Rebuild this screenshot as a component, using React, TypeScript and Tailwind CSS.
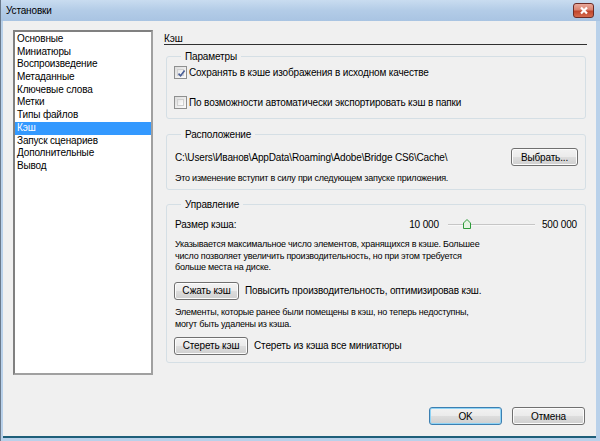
import React from "react"

const font = "font-['Tahoma','Liberation_Sans',Arial,sans-serif]"
const txt = "text-[10px] tracking-[-0.15px]"
const small = "text-[9px] tracking-[-0.22px]"

const items = [
  "Основные",
  "Миниатюры",
  "Воспроизведение",
  "Метаданные",
  "Ключевые слова",
  "Метки",
  "Типы файлов",
  "Кэш",
  "Запуск сценариев",
  "Дополнительные",
  "Вывод",
]

function Btn({ children, w, primary }: { children: React.ReactNode; w: string; primary?: boolean }) {
  return (
    <div
      className={`${w} ${txt} h-[18px] flex items-center justify-center rounded-[3px] border text-black bg-[linear-gradient(to_bottom,#f2f2f2_0%,#ebebeb_48%,#dddddd_52%,#cfcfcf_100%)] ${
        primary ? "border-[#3c7fb1] shadow-[inset_0_0_0_1px_#8fd3f5]" : "border-[#707070] shadow-[inset_0_0_0_1px_#fcfcfc]"
      }`}
    >
      {children}
    </div>
  )
}

function Check({ checked, label }: { checked?: boolean; label: string }) {
  return (
    <div className="flex items-center h-[13px]">
      <div className="w-[13px] h-[13px] border border-[#8e8f8f] bg-[linear-gradient(135deg,#dcdcdc,#fbfbfb)] p-[2px] flex">
        <div className="flex-1 bg-[linear-gradient(135deg,#e6e6e6,#ffffff)] border border-[#d0d0d0] relative">
          {checked && (
            <svg viewBox="0 0 9 9" className="absolute -left-[1px] -top-[1px] w-[9px] h-[9px]">
              <path d="M1.5 4.6 L3.6 6.8 L7.6 1.5" stroke="#4a5f97" strokeWidth="1.6" fill="none" />
            </svg>
          )}
        </div>
      </div>
      <span className={`ml-[2px] ${txt} leading-[13px]`}>{label}</span>
    </div>
  )
}

function Group({ title, className, children }: { title: string; className?: string; children: React.ReactNode }) {
  return (
    <fieldset className={`border border-[#d5dfe5] rounded-[3px] ml-[2px] mr-[1px] px-[7px] ${className ?? ""}`}>
      <legend className={`ml-[7px] px-[4px] ${txt} leading-[13px]`}>{title}</legend>
      {children}
    </fieldset>
  )
}

export default function App() {
  return (
    <div className={`${font} w-[600px] h-[441px] flex flex-col bg-[#b9d1ea] border-l border-[#6b7a8c] text-black`}>
      {/* заголовок */}
      <div className="h-[21px] flex items-center justify-between pl-[5px] pr-[6px] bg-[linear-gradient(to_bottom,#c9dcf0,#b3cce7_50%,#a9c4e2)]">
        <span className={`${txt} leading-none`}>Установки</span>
        <div className="w-[21px] h-[15px] rounded-[3px] border border-[#6d2b25] flex items-center justify-center bg-[linear-gradient(to_bottom,#e9a99b_0%,#d9826f_45%,#c0452c_55%,#d56a4d_100%)]">
          <svg viewBox="0 0 10 9" className="w-[10px] h-[9px]">
            <path d="M2 1.5 L8 7.5 M8 1.5 L2 7.5" stroke="#ffffff" strokeWidth="2.2" />
          </svg>
        </div>
      </div>

      {/* тело */}
      <div className="flex-1 flex flex-col mr-[4px] mb-[3px] ml-[2px] bg-[#f0f0f0] border-b-[2px] border-[#1e5f7a]">
        <div className="flex pt-[9px] pl-[10px]">
          <div className="w-[140px] h-[345px] border-2 border-t-[#808080] border-l-[#808080] border-r-[#a0a0a0] border-b-[#a0a0a0] bg-white pt-[1px]">
            {items.map((it) => (
              <div
                key={it}
                className={`h-[12.7px] pl-[2px] ${txt} leading-[12.7px] ${
                  it === "Кэш" ? "bg-[#3399ff] text-white" : ""
                }`}
              >
                {it}
              </div>
            ))}
          </div>

          <div className="ml-[11px] w-[423px] flex flex-col">
            <div className={`h-[15px] border-b border-[#303030] ${txt} leading-[13px] pt-[2px]`}>Кэш</div>

            <Group title="Параметры" className="mt-[5px] pb-[9px]">
              <div className="mt-[3px]">
                <Check checked label="Сохранять в кэше изображения в исходном качестве" />
              </div>
              <div className="mt-[17px]">
                <Check label="По возможности автоматически экспортировать кэш в папки" />
              </div>
            </Group>

            <Group title="Расположение" className="mt-[9px] pb-[4px]">
              <div className="mt-[7px] flex items-center justify-between">
                <span className={`${txt} pl-[1px]`}>C:\Users\Иванов\AppData\Roaming\Adobe\Bridge CS6\Cache\</span>
                <Btn w="w-[67px]">Выбрать...</Btn>
              </div>
              <div className={`mt-[6px] pl-[1px] ${small} leading-[13px]`}>
                Это изменение вступит в силу при следующем запуске приложения.
              </div>
            </Group>

            <Group title="Управление" className="mt-[8px] pb-[7px]">
              <div className={`mt-[7px] flex items-center h-[13px] ${txt}`}>
                <span className="pl-[1px]">Размер кэша:</span>
                <span className="ml-auto">10 000</span>
                <div className="relative w-[87px] h-[13px] ml-[9px] mr-[7px]">
                  <div className="absolute left-0 right-0 top-[6px] h-[2px] bg-[#c6c6c6] border-b border-[#f8f8f8]" />
                  <svg viewBox="0 0 8 10" className="absolute left-[15px] top-[1px] w-[8px] h-[10px]">
                    <path d="M4 0.5 L7.5 4 L7.5 9.5 L0.5 9.5 L0.5 4 Z" fill="#e6f4e3" stroke="#2e9b3a" strokeWidth="1" />
                  </svg>
                </div>
                <span className="pr-[1px]">500 000</span>
              </div>

              <div className={`mt-[8px] pl-[1px] ${small} leading-[11.5px]`}>
                Указывается максимальное число элементов, хранящихся в кэше. Большее
                <br />
                число позволяет увеличить производительность, но при этом требуется
                <br />
                больше места на диске.
              </div>

              <div className="mt-[8px] flex items-center">
                <Btn w="w-[65px]">Сжать кэш</Btn>
                <span className={`ml-[6px] ${txt}`}>Повысить производительность, оптимизировав кэш.</span>
              </div>

              <div className={`mt-[6px] pl-[1px] ${small} leading-[12px]`}>
                Элементы, которые ранее были помещены в кэш, но теперь недоступны,
                <br />
                могут быть удалены из кэша.
              </div>

              <div className="mt-[7px] flex items-center">
                <Btn w="w-[74px]">Стереть кэш</Btn>
                <span className={`ml-[6px] ${txt}`}>Стереть из кэша все миниатюры</span>
              </div>
            </Group>
          </div>
        </div>

        {/* кнопки */}
        <div className="mt-auto mb-[11px] flex justify-end gap-[10px] pr-[11px]">
          <Btn w="w-[73px]" primary>OK</Btn>
          <Btn w="w-[73px]">Отмена</Btn>
        </div>
      </div>
    </div>
  )
}
